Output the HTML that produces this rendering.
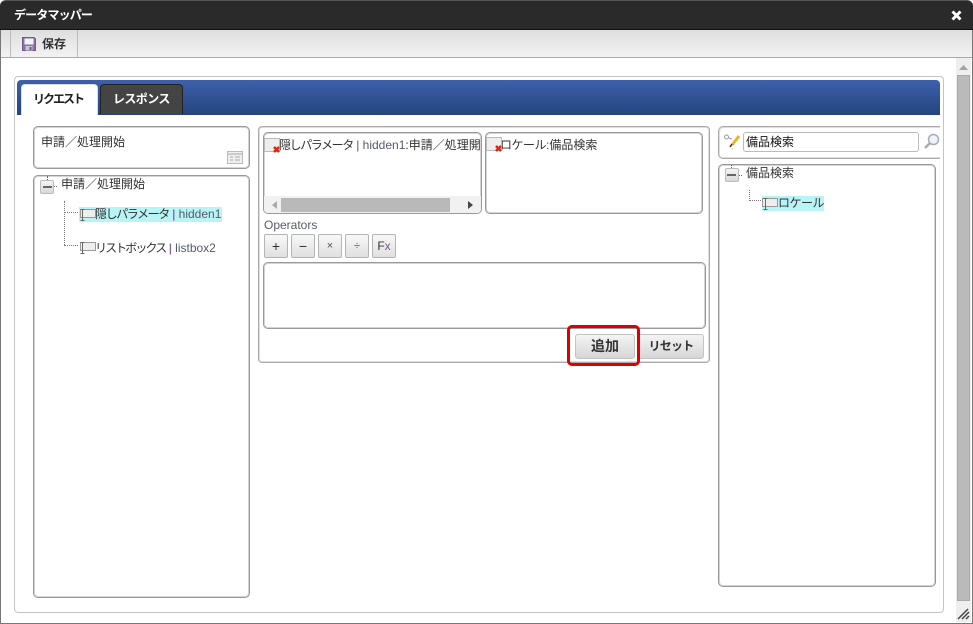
<!DOCTYPE html>
<html lang="ja">
<head>
<meta charset="utf-8">
<title>データマッパー</title>
<style>
html,body{margin:0;padding:0;width:973px;height:624px;overflow:hidden;background:#fff}
body{position:relative;font-family:"Liberation Sans","WenQuanYi Zen Hei","Noto Sans CJK JP",sans-serif;font-size:12px;color:#333}
div,svg{position:absolute;box-sizing:border-box}
.t{white-space:nowrap;line-height:16px}
.box{background:#fff;border:1px solid #999;box-shadow:inset 0 0 0 1px #d4d4d4;border-radius:5px}
.op{top:234px;width:24px;height:24px;border:1px solid #b4b4b4;border-radius:2px;background:linear-gradient(#f8f8f8,#e0e0e0);text-align:center;line-height:22px;color:#333}
.btn{border:1px solid #c4c4c4;border-radius:3px;background:linear-gradient(#f4f4f4,#d6d6d6);text-align:center;font-weight:bold;color:#333;line-height:23px}
.sel{background:#b8f3f6}
.pu{color:#7b2d8b}.bl{color:#555b68}
.k{letter-spacing:-1.4px}
.k2{letter-spacing:-1.9px}
.k3{letter-spacing:-.5px}
</style>
</head>
<body>
<!-- Window frame -->
<div style="left:0;top:0;width:973px;height:624px;border:1px solid #777;border-top:0;border-radius:6px 6px 0 0;background:#fff"></div>
<!-- Title bar -->
<div style="left:0;top:0;width:973px;height:30px;background:#2a2a2a;border-top:1px solid #555;border-radius:6px 6px 0 0;border-bottom:1px solid #111"></div>
<div class="t" style="left:14px;top:7px;color:#fff;font-weight:bold;letter-spacing:-.85px">データマッパー</div>
<svg style="left:951px;top:10px" width="11" height="11" viewBox="0 0 11 11"><path d="M1.500 1.500L9.500 9.500M9.500 1.500L1.500 9.500" stroke="#fff" stroke-width="3"/></svg>
<!-- Toolbar -->
<div style="left:1px;top:30px;width:971px;height:28px;background:linear-gradient(#dedede,#f2f2f2);border-bottom:1px solid #aaa"></div>
<div style="left:10px;top:30px;width:68px;height:27px;border-left:1px solid #bbb;border-right:1px solid #bbb"></div>
<svg style="left:22px;top:37px" width="14" height="14" viewBox="0 0 14 14"><path d="M0.500 0.500H12L13.500 2V13.500H0.500Z" fill="#8a6fa8" stroke="#74578f"/><rect x="2.500" y="1.500" width="9" height="6" fill="#f4f4f8"/><rect x="3.500" y="9" width="7" height="4.500" fill="#c9c9c9"/><rect x="7.500" y="10" width="2" height="3" fill="#6a5a80"/></svg>
<div class="t" style="left:42px;top:36px;font-weight:bold;color:#333">保存</div>
<!-- Scrollbar -->
<div style="left:956px;top:58px;width:15px;height:564px;background:#eee"></div>
<svg style="left:959px;top:65px" width="9" height="5" viewBox="0 0 9 5"><path d="M4.500 0L9 5H0Z" fill="#a3a3a3"/></svg>
<div style="left:957px;top:75px;width:13px;height:526px;background:#bababa;border:1px solid #aaa"></div>
<svg style="left:956px;top:606px" width="14" height="14" viewBox="0 0 14 14"><path d="M2 13L12 3M6 13L13 6M10 13L13 10" stroke="#444" stroke-width="1.500"/></svg>
<!-- Outer panel -->
<div style="left:14px;top:76px;width:930px;height:537px;border:1px solid #c4c4c4;border-radius:4px;background:#fff"></div>
<!-- Blue bar -->
<div style="left:17px;top:80px;width:923px;height:35px;border-radius:4px 4px 0 0;background:linear-gradient(#3c60aa,#25447f)"></div>
<div style="left:21px;top:84px;width:77px;height:31px;background:#fff;border-radius:4px 4px 0 0;border:1px solid #ddd;border-bottom:0"></div>
<div class="t" style="left:33px;top:91px;font-weight:bold;color:#222;letter-spacing:-2px">リクエスト</div>
<div style="left:100px;top:84px;width:83px;height:30px;background:#444;border-radius:4px 4px 0 0;border:1px solid #222;border-bottom:0"></div>
<div class="t" style="left:113px;top:91px;font-weight:bold;color:#fff;letter-spacing:-.6px">レスポンス</div>
<!-- Left column -->
<div class="box" style="left:33px;top:126px;width:217px;height:43px"></div>
<div class="t" style="left:41px;top:134px">申請／処理開始</div>
<svg style="left:227px;top:151px" width="16" height="13" viewBox="0 0 16 13"><rect x=".5" y=".5" width="15" height="12" fill="#f0f0f0" stroke="#bbb"/><path d="M1 3H15" stroke="#ccc" stroke-width="2"/><path d="M3 6H6M8 6H13M3 9H6M8 9H13" stroke="#aaa"/></svg>
<div class="box" style="left:33px;top:175px;width:217px;height:423px"></div>
<div style="left:40px;top:180px;width:14px;height:14px;background:linear-gradient(#f4f4f4,#d8d8d8);border:1px solid #bbb;border-radius:2px"></div>
<div style="left:43px;top:186px;width:9px;height:2px;background:#666"></div>
<div style="left:47px;top:176px;width:0;height:4px;border-left:1px dotted #666"></div>
<div style="left:54px;top:186px;width:3px;border-top:1px dotted #666"></div>
<div class="t" style="left:61px;top:176px">申請／処理開始</div>
<div style="left:64px;top:201px;height:44px;border-left:1px dotted #777"></div>
<div style="left:64px;top:212px;width:14px;border-top:1px dotted #777"></div>
<div style="left:64px;top:245px;width:14px;border-top:1px dotted #777"></div>
<div class="sel" style="left:79px;top:207px;width:143px;height:15px"></div>
<svg style="left:79px;top:209px" width="17" height="13" viewBox="0 0 17 13"><rect x="1.500" y=".5" width="15" height="8" fill="#eee" stroke="#999"/><path d="M3.500 0V12M1.500 .5H5.500M1.500 11.500H5.500" stroke="#666"/></svg>
<div class="t" style="left:95px;top:206px"><span class="k">隠しパラメータ</span> <span class="pu">|</span> <span class="bl">hidden1</span></div>
<svg style="left:79px;top:242px" width="17" height="13" viewBox="0 0 17 13"><rect x="1.500" y=".5" width="15" height="8" fill="#eee" stroke="#999"/><path d="M3.500 0V12M1.500 .5H5.500M1.500 11.500H5.500" stroke="#666"/></svg>
<div class="t" style="left:95px;top:240px"><span class="k2">リストボックス</span> <span class="pu">|</span> <span class="bl">listbox2</span></div>
<!-- Center column -->
<div style="left:258px;top:126px;width:452px;height:237px;border:1px solid #aaa;box-shadow:inset 0 0 0 1px #ddd;border-radius:4px;background:#fff"></div>
<div class="box" style="left:263px;top:132px;width:219px;height:82px;overflow:hidden">
  <div class="t" style="left:15px;top:4px;width:201px;overflow:hidden"><span class="k">隠しパラメータ</span> <span class="bl">|</span> <span class="bl">hidden1</span>:申請／処理開始</div>
  <div style="left:0;top:63px;width:217px;height:18px;background:#f1f1f1"></div>
  <div style="left:17px;top:65px;width:169px;height:14px;background:#b9b9b9"></div>
  <svg style="left:7px;top:68px" width="6" height="8" viewBox="0 0 6 8"><path d="M6 0V8L1 4Z" fill="#aaa"/></svg>
  <svg style="left:204px;top:68px" width="6" height="8" viewBox="0 0 6 8"><path d="M0 0V8L5 4Z" fill="#444"/></svg>
  <svg style="left:0;top:5px" width="17" height="16" viewBox="0 0 17 16"><rect x=".5" y=".5" width="15" height="13" fill="#eee" stroke="#bbb"/><path d="M10 9L15 14M15 9L10 14" stroke="#e8200c" stroke-width="2.500"/></svg>
</div>
<div class="box" style="left:485px;top:132px;width:218px;height:82px">
  <div class="t" style="left:14px;top:4px"><span class="k3">ロケール</span><span class="pu">:</span>備品検索</div>
  <svg style="left:0;top:4px" width="17" height="16" viewBox="0 0 17 16"><rect x=".5" y=".5" width="15" height="13" fill="#eee" stroke="#bbb"/><path d="M10 9L15 14M15 9L10 14" stroke="#e8200c" stroke-width="2.500"/></svg>
</div>
<div class="t" style="left:264px;top:217px;color:#555b68">Operators</div>
<div class="op" style="left:264px;font-size:14px">+</div>
<div class="op" style="left:291px;font-size:14px">−</div>
<div class="op" style="left:318px;font-size:11px;color:#555">×</div>
<div class="op" style="left:345px;font-size:11px;color:#555">÷</div>
<div class="op" style="left:372px"><span style="color:#333">F</span><span style="color:#7a5a8a">x</span></div>
<div class="box" style="left:263px;top:262px;width:443px;height:67px"></div>
<div class="btn" style="left:575px;top:334px;width:60px;height:25px;font-size:14px">追加</div>
<div class="btn" style="left:638px;top:334px;width:66px;height:25px;letter-spacing:-.75px">リセット</div>
<div style="left:567px;top:325px;width:73px;height:41px;border:3px solid #dd0000;border-radius:5px"></div>
<!-- Right column -->
<div style="left:718px;top:126px;width:222px;height:33px;border:1px solid #aaa;border-right:0;box-shadow:inset 1px 1px 0 #ddd,inset 0 -1px 0 #ddd;border-radius:5px 0 0 5px;background:#fff"></div>
<svg style="left:724px;top:134px" width="17" height="16" viewBox="0 0 17 16"><circle cx="2.500" cy="3" r="2" fill="#fff" stroke="#999"/><path d="M5 4L8 5" stroke="#999"/><path d="M8 11L15 2" stroke="#e8b820" stroke-width="3"/><path d="M6 13L8 10" stroke="#333" stroke-width="1.500"/><path d="M8 15H9" stroke="#aaa"/></svg>
<div style="left:743px;top:132px;width:176px;height:20px;border:1px solid #bbb;border-radius:3px;background:#fff"></div>
<div class="t" style="left:746px;top:134px;color:#111">備品検索</div>
<svg style="left:923px;top:133px" width="17" height="17" viewBox="0 0 17 17"><circle cx="10.500" cy="6.500" r="5" fill="#eef3f8" stroke="#aab" stroke-width="1.500"/><path d="M7 10L2 15" stroke="#aaa" stroke-width="2.500"/></svg>
<div class="box" style="left:718px;top:164px;width:218px;height:423px"></div>
<div style="left:725px;top:168px;width:14px;height:14px;background:linear-gradient(#f4f4f4,#d8d8d8);border:1px solid #bbb;border-radius:2px"></div>
<div style="left:727px;top:174px;width:9px;height:2px;background:#666"></div>
<div style="left:731px;top:165px;height:3px;border-left:1px dotted #666"></div>
<div style="left:739px;top:175px;width:3px;border-top:1px dotted #666"></div>
<div class="t" style="left:746px;top:165px">備品検索</div>
<div style="left:749px;top:190px;height:11px;border-left:1px dotted #777"></div>
<div style="left:749px;top:200px;width:12px;border-top:1px dotted #777"></div>
<div class="sel" style="left:762px;top:196px;width:62px;height:15px"></div>
<svg style="left:762px;top:198px" width="17" height="13" viewBox="0 0 17 13"><rect x=".5" y=".5" width="15" height="8" fill="#eee" stroke="#999"/><path d="M3.500 0V12M1.500 .5H5.500M1.500 11.500H5.500" stroke="#666"/></svg>
<div class="t" style="left:778px;top:195px;letter-spacing:-.5px">ロケール</div>
</body>
</html>
